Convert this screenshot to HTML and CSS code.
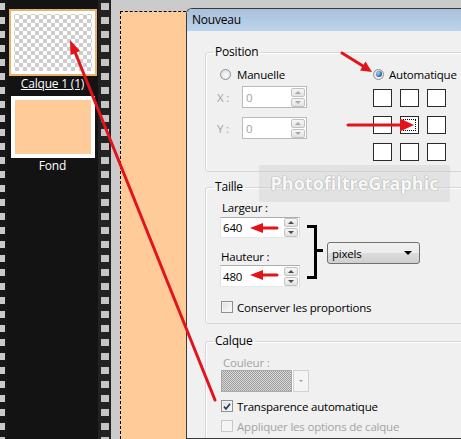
FILE: index.html
```html
<!DOCTYPE html>
<html lang="fr">
<head>
    <meta charset="UTF-8">
    <meta name="viewport" content="width=device-width, initial-scale=1.0">
    <title>Nouveau calque</title>
    <link rel="stylesheet" href="styles.css">
</head>
<body>
    <div class="screen">
        <div class="film">
            <div class="sprockets sprockets-left"></div>
            <div class="layers">
                <div class="layer">
                    <div class="thumb thumb-selected"></div>
                    <div class="layer-name layer-name-active">Calque 1 (1)</div>
                </div>
                <div class="layer">
                    <div class="thumb thumb-fond"></div>
                    <div class="layer-name">Fond</div>
                </div>
            </div>
            <div class="sprockets sprockets-right"></div>
        </div>

        <div class="workspace">
            <div class="canvas"></div>

            <div class="dialog">
                <div class="titlebar">Nouveau</div>
                <div class="dialog-body">

                    <fieldset class="group group-position">
                        <legend>Position</legend>
                        <div class="position-cols">
                            <div class="col-manual">
                                <label class="radio"><span class="radio-dot"></span>Manuelle</label>
                                <div class="coord-row">
                                    <span class="coord-label disabled">X :</span>
                                    <div class="spin spin-xy disabled">
                                        <span class="spin-value">0</span>
                                        <span class="spin-buttons">
                                            <span class="spin-btn"><i class="tri-up"></i></span>
                                            <span class="spin-btn"><i class="tri-down"></i></span>
                                        </span>
                                    </div>
                                </div>
                                <div class="coord-row coord-row-y">
                                    <span class="coord-label disabled">Y :</span>
                                    <div class="spin spin-xy disabled">
                                        <span class="spin-value">0</span>
                                        <span class="spin-buttons">
                                            <span class="spin-btn"><i class="tri-up"></i></span>
                                            <span class="spin-btn"><i class="tri-down"></i></span>
                                        </span>
                                    </div>
                                </div>
                            </div>
                            <div class="col-auto">
                                <label class="radio radio-auto"><span class="radio-dot checked"><span class="radio-fill"></span></span>Automatique</label>
                                <div class="anchor-grid">
                                    <span class="anchor"></span>
                                    <span class="anchor"></span>
                                    <span class="anchor"></span>
                                    <span class="anchor"></span>
                                    <span class="anchor anchor-focus"></span>
                                    <span class="anchor"></span>
                                    <span class="anchor"></span>
                                    <span class="anchor"></span>
                                    <span class="anchor"></span>
                                </div>
                            </div>
                        </div>
                    </fieldset>

                    <fieldset class="group group-size">
                        <legend>Taille</legend>
                        <div class="size-row">
                            <div class="size-fields">
                                <div class="field-label field-label-w">Largeur :</div>
                                <div class="spin spin-size">
                                    <span class="spin-value">640</span>
                                    <span class="spin-buttons">
                                        <span class="spin-btn"><i class="tri-up"></i></span>
                                        <span class="spin-btn"><i class="tri-down"></i></span>
                                    </span>
                                </div>
                                <div class="field-label field-label-h">Hauteur :</div>
                                <div class="spin spin-size spin-height">
                                    <span class="spin-value">480</span>
                                    <span class="spin-buttons">
                                        <span class="spin-btn"><i class="tri-up"></i></span>
                                        <span class="spin-btn"><i class="tri-down"></i></span>
                                    </span>
                                </div>
                            </div>
                            <svg class="bracket" width="20" height="54" viewBox="0 0 20 54">
                                <path d="M0 1.5 H8.5 V52.5 H0 M8.5 25.5 H16" fill="none" stroke="#000" stroke-width="3"/>
                            </svg>
                            <div class="unit-select">
                                <span>pixels</span>
                                <i class="tri-select"></i>
                            </div>
                        </div>
                        <label class="check check-keep"><span class="check-box"></span>Conserver les proportions</label>
                    </fieldset>

                    <fieldset class="group group-layer">
                        <legend>Calque</legend>
                        <div class="field-label field-label-color disabled">Couleur :</div>
                        <div class="color-combo">
                            <span class="color-swatch"></span>
                            <span class="color-btn"><i class="tri-small"></i></span>
                        </div>
                        <label class="check check-transp">
                            <span class="check-box">
                                <svg width="11" height="11" viewBox="0 0 11 11"><path d="M2.2 5.6 L4.4 8.2 L8.8 2.4" fill="none" stroke="#26396a" stroke-width="1.9"/></svg>
                            </span>Transparence automatique</label>
                        <label class="check check-apply disabled"><span class="check-box check-box-off"></span>Appliquer les options de calque</label>
                    </fieldset>

                </div>
            </div>
        </div>

        <div class="watermark">PhotofiltreGraphic</div>

        <svg class="annotations" width="461" height="439" viewBox="0 0 461 439">
            <g stroke="#e3131b" stroke-width="3" fill="none" stroke-linecap="round">
                <line x1="215" y1="400" x2="75" y2="52"/>
                <line x1="342" y1="53" x2="363" y2="66"/>
                <line x1="348" y1="125" x2="402" y2="125"/>
                <line x1="261" y1="228" x2="277" y2="228"/>
                <line x1="261" y1="275" x2="277" y2="275"/>
            </g>
            <g fill="#e3131b">
                <polygon points="70,40 80,51 70.5,55"/>
                <polygon points="372,72 360,70.5 365.5,61.5"/>
                <polygon points="414,125 400,118.5 400,131.5"/>
                <polygon points="250,228 263,223 263,233"/>
                <polygon points="250,275 263,270 263,280"/>
            </g>
        </svg>
    </div>
</body>
</html>
```

FILE: styles.css
```css
* {
    box-sizing: border-box;
}
html, body {
    margin: 0;
    height: 100%;
}
body {
    font-family: "Open Sans", "Noto Sans", sans-serif;
    font-size: 11.5px;
    letter-spacing: -0.2px;
    color: #000;
    overflow: hidden;
}
.screen {
    position: relative;
    display: flex;
    width: 461px;
    height: 439px;
    overflow: hidden;
    background: #cbcbcb;
}

/* layer strip */
.film {
    display: flex;
    flex: none;
    width: 111px;
    background: #131313;
}
.sprockets {
    flex: none;
    background-repeat: repeat-y;
}
.sprockets-left {
    width: 7px;
    background-color: #161616;
    background-image: linear-gradient(#c9c9c9 7px, transparent 7px);
    background-size: 5px 14px;
    background-position: 0 3px;
}
.sprockets-right {
    width: 13px;
    background-color: #222;
    background-image: linear-gradient(#c6c6c6 7px, transparent 7px);
    background-size: 8px 14px;
    background-position: 3px 3px;
}
.layers {
    width: 91px;
    display: flex;
    flex-direction: column;
    align-items: center;
    padding-top: 9px;
}
.layer {
    display: flex;
    flex-direction: column;
    align-items: center;
}
.thumb-selected {
    width: 88px;
    height: 67px;
    border: 2px solid #e4b46c;
    box-shadow: inset 0 0 0 3px #fff;
    background: repeating-conic-gradient(#cdcdcd 0 25%, #fff 0 50%) 0 0 / 8px 8px;
}
.thumb-fond {
    width: 84px;
    height: 62px;
    margin-top: 5px;
    border: 4px solid #fff;
    background: #fecb99;
}
.layer-name {
    color: #fff;
    font-size: 12px;
    line-height: 14px;
    margin-top: 1px;
}
.layer-name-active {
    text-decoration: underline;
}

/* workspace + dialog */
.workspace {
    flex: 1;
    display: flex;
    padding-top: 8px;
}
.canvas {
    flex: none;
    width: 66px;
    margin: 3px 0 0 9px;
    background: #fecb99;
    border-top: 1px dashed #000;
    border-left: 1px dashed #000;
}
.dialog {
    flex: none;
    width: 290px;
    background: #f0f0f0;
    border: 1px solid #3a3a3a;
    border-right: none;
    border-radius: 6px 0 0 0;
    overflow: hidden;
}
.titlebar {
    height: 22px;
    line-height: 22px;
    padding-left: 5px;
    font-size: 12px;
    background: linear-gradient(#a9c0da, #bdd4ed);
}
.dialog-body {
    padding: 13px 0 0 18px;
}

.group {
    width: 270px;
    margin: 0;
    padding: 0 0 0 11px;
    border: 1px solid #d3d6d9;
    border-radius: 3px;
    box-shadow: inset 1px 1px 0 #fff;
}
.group legend {
    padding: 0 2px;
    margin-left: -4px;
    line-height: 16px;
    font-size: 12px;
}
.disabled {
    color: #a3a3a3;
}

/* position */
.group-position {
    padding-top: 6px;
    padding-bottom: 10px;
}
.position-cols {
    display: flex;
}
.col-manual {
    width: 156px;
}
.radio {
    display: flex;
    align-items: center;
    height: 16px;
    gap: 6px;
    margin-left: 3px;
}
.radio-auto {
    margin-left: 0;
    gap: 5px;
}
.radio-dot {
    width: 11px;
    height: 11px;
    border-radius: 50%;
    border: 1px solid #8d9095;
    background: radial-gradient(circle at 60% 60%, #fdfdfd, #d6d6d6);
    display: flex;
    align-items: center;
    justify-content: center;
}
.radio-fill {
    width: 6px;
    height: 6px;
    border-radius: 50%;
    background: radial-gradient(circle at 35% 35%, #a9dcfb, #1c5aa0 70%);
}
.coord-row {
    display: flex;
    align-items: center;
    margin-top: 4px;
}
.coord-row-y {
    margin-top: 9px;
}
.coord-label {
    width: 25px;
}

.spin {
    display: flex;
    align-items: center;
    justify-content: space-between;
    background: #fff;
    border: 1px solid;
    border-color: #abadb3 #dbdfe6 #e3e9ef #e2e3ea;
}
.spin-value {
    padding-left: 3px;
}
.spin-xy {
    width: 65px;
    height: 22px;
    border-color: #b8babd;
    padding-right: 1px;
}
.spin-size {
    width: 80px;
    height: 21px;
    padding-right: 1px;
}
.spin-size .spin-value {
    padding-left: 2px;
}
.spin-buttons {
    display: flex;
    flex-direction: column;
    gap: 1px;
}
.spin-btn {
    width: 14px;
    height: 9px;
    border: 1px solid #c2c2c2;
    border-radius: 2px;
    background: linear-gradient(#f6f6f6, #e2e2e2);
    display: flex;
    align-items: center;
    justify-content: center;
}
.tri-up, .tri-down {
    width: 0;
    height: 0;
    border-left: 3px solid transparent;
    border-right: 3px solid transparent;
}
.tri-up {
    border-bottom: 3px solid #4c4c4c;
}
.tri-down {
    border-top: 3px solid #4c4c4c;
}
.disabled .tri-up {
    border-bottom-color: #a8a8a8;
}
.disabled .tri-down {
    border-top-color: #a8a8a8;
}

.anchor-grid {
    display: grid;
    grid-template-columns: repeat(3, 19px);
    grid-auto-rows: 18px;
    column-gap: 8px;
    row-gap: 9px;
    margin-top: 7px;
}
.anchor {
    background: #fff;
    border: 1px solid #2b2b2b;
}
.anchor-focus {
    outline: 1px dotted #000;
    outline-offset: -4px;
}

/* size */
.group-size {
    margin-top: 7px;
    padding-top: 5px;
    padding-bottom: 8px;
}
.size-row {
    display: flex;
    margin-left: 3px;
}
.size-fields {
    width: 80px;
}
.field-label {
    line-height: 15px;
}
.field-label-w {
    padding-left: 2px;
}
.spin-size {
    margin-top: 2px;
}
.field-label-h {
    margin-top: 11px;
    padding-left: 1px;
}
.spin-height {
    margin-top: 1px;
    height: 22px;
}
.bracket {
    flex: none;
    margin: 25px 0 0 7px;
}
.unit-select {
    width: 93px;
    height: 22px;
    margin-top: 42px;
    display: flex;
    align-items: center;
    justify-content: space-between;
    padding: 0 7px 0 4px;
    border: 1px solid #707070;
    border-radius: 3px;
    background: linear-gradient(#f2f2f2, #ebebeb 50%, #dddddd 50%, #cfcfcf);
}
.tri-select {
    width: 0;
    height: 0;
    border-left: 4px solid transparent;
    border-right: 4px solid transparent;
    border-top: 4px solid #000;
}

.check {
    display: flex;
    align-items: center;
    height: 16px;
    gap: 4px;
    margin-left: 4px;
}
.check-keep {
    margin-top: 12px;
}
.check-box {
    width: 12px;
    height: 12px;
    border: 1px solid #8e8f8f;
    background: linear-gradient(135deg, #dcdcdc, #fefefe);
    box-shadow: inset 0 0 0 1px #f4f4f4;
    display: flex;
    align-items: center;
    justify-content: center;
}
.check-box-off {
    border-color: #c8c8c8;
    background: #f4f4f4;
}

/* layer */
.group-layer {
    margin-top: 9px;
    padding-top: 6px;
    height: 120px;
}
.field-label-color {
    padding-left: 6px;
}
.color-combo {
    display: flex;
    width: 88px;
    height: 22px;
    margin-left: 4px;
    gap: 1px;
    background: #fff;
}
.color-swatch {
    width: 71px;
    border: 1px solid #a8a8a8;
    background: repeating-conic-gradient(#9b9b9b 0 25%, #dadada 0 50%) 0 0 / 2px 2px;
}
.color-btn {
    flex: 1;
    border: 1px solid #d2d2d2;
    background: #f4f4f4;
    display: flex;
    align-items: center;
    justify-content: center;
}
.tri-small {
    width: 0;
    height: 0;
    border-left: 2px solid transparent;
    border-right: 2px solid transparent;
    border-top: 2px solid #9a9a9a;
}
.check-transp {
    margin-top: 6px;
}
.check-apply {
    margin-top: 4px;
}

/* overlays */
.watermark {
    position: absolute;
    left: 259px;
    top: 165px;
    width: 191px;
    height: 37px;
    background: rgba(205, 205, 205, 0.4);
    border-radius: 2px;
    text-align: center;
    line-height: 37px;
    font-weight: 700;
    font-size: 18px;
    letter-spacing: 0;
    color: #f8f8f8;
    text-shadow: 0 0 1px #aeaeae, 0 0 1px #aeaeae, 0 0 1px #aeaeae;
}
.annotations {
    position: absolute;
    left: 0;
    top: 0;
    pointer-events: none;
}
```
